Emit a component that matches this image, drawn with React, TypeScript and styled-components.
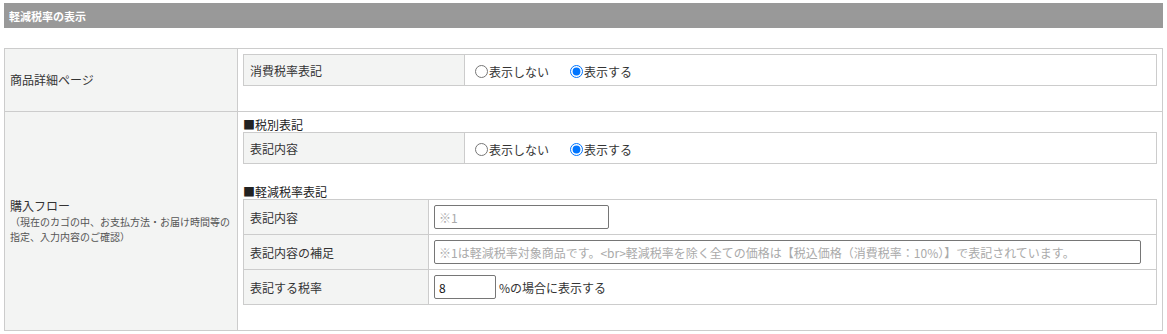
import React from "react";
import styled, { createGlobalStyle } from "styled-components";

const GlobalStyle = createGlobalStyle`
  body {
    margin: 0;
    padding: 3px 4px 0;
    background: #fff;
    color: #333;
    font-family: "Noto Sans CJK JP", "Noto Sans", sans-serif;
    font-size: 12px;
  }
`;

const Title = styled.h2`
  margin: 0;
  height: 25px;
  padding-left: 5px;
  display: flex;
  align-items: center;
  background: #999999;
  color: #fff;
  font-size: 11px;
  font-weight: bold;
`;

const OuterTable = styled.table`
  width: 100%;
  margin-top: 20px;
  border-collapse: collapse;
`;

const HeadCell = styled.th`
  width: 222px;
  padding: 0 5px;
  border: 1px solid #cccccc;
  background: #f3f4f3;
  font-weight: normal;
  text-align: left;
  vertical-align: middle;
  line-height: 16px;
`;

const Note = styled.div`
  color: #555;
  font-size: 10px;
  line-height: 15px;
`;

const BodyCell = styled.td`
  padding: 5px;
  border: 1px solid #cccccc;
  vertical-align: top;
`;

const SubHeading = styled.div`
  line-height: 15px;
  color: #222;
`;

const InnerTable = styled.table<{ $rowHeight: number }>`
  width: 100%;
  margin-bottom: 20px;
  border-collapse: collapse;

  td {
    height: ${(p) => p.$rowHeight}px;
    padding: 0 5px;
    border: 1px solid #cccccc;
    vertical-align: middle;
  }
`;

const Label = styled.td<{ $width: number }>`
  width: ${(p) => p.$width}px;
  background: #f3f4f3;
  && {
    padding: 0 6px;
  }
`;

const RadioGroup = styled.div`
  display: flex;
  align-items: center;
  gap: 16px;
  padding-top: 3px;
`;

const RadioLabel = styled.label`
  display: flex;
  align-items: center;
  color: #333;

  input {
    width: 13px;
    height: 13px;
    margin: 0 1px 0 5px;
  }
`;

const TextInput = styled.input<{ $width: number }>`
  box-sizing: border-box;
  width: ${(p) => p.$width}px;
  height: 24px;
  padding: 0 4px;
  border: 1px solid #767676;
  border-radius: 2px;
  font-family: inherit;
  font-size: 12px;
  color: #111;
  vertical-align: middle;

  &::placeholder {
    color: #aaa;
  }
`;

const Suffix = styled.span`
  margin-left: 3px;
  vertical-align: middle;
`;

const DisplayRadios = ({ name }: { name: string }) => (
  <RadioGroup>
    <RadioLabel>
      <input type="radio" name={name} />
      表示しない
    </RadioLabel>
    <RadioLabel>
      <input type="radio" name={name} defaultChecked />
      表示する
    </RadioLabel>
  </RadioGroup>
);

export default function App() {
  return (
    <>
      <GlobalStyle />
      <Title>軽減税率の表示</Title>
      <OuterTable>
        <tbody>
          <tr>
            <HeadCell>商品詳細ページ</HeadCell>
            <BodyCell>
              <InnerTable $rowHeight={30}>
                <tbody>
                  <tr>
                    <Label $width={208}>消費税率表記</Label>
                    <td>
                      <DisplayRadios name="detail" />
                    </td>
                  </tr>
                </tbody>
              </InnerTable>
            </BodyCell>
          </tr>
          <tr>
            <HeadCell>
              購入フロー
              <Note>
                （現在のカゴの中、お支払方法・お届け時間等の
                <br />
                指定、入力内容のご確認）
              </Note>
            </HeadCell>
            <BodyCell>
              <SubHeading>■税別表記</SubHeading>
              <InnerTable $rowHeight={30}>
                <tbody>
                  <tr>
                    <Label $width={208}>表記内容</Label>
                    <td>
                      <DisplayRadios name="excl" />
                    </td>
                  </tr>
                </tbody>
              </InnerTable>
              <SubHeading>■軽減税率表記</SubHeading>
              <InnerTable $rowHeight={34}>
                <tbody>
                  <tr>
                    <Label $width={172}>表記内容</Label>
                    <td>
                      <TextInput $width={175} placeholder="※1" />
                    </td>
                  </tr>
                  <tr>
                    <Label $width={172}>表記内容の補足</Label>
                    <td>
                      <TextInput
                        $width={707}
                        placeholder="※1は軽減税率対象商品です。<br>軽減税率を除く全ての価格は【税込価格（消費税率：10%）】で表記されています。"
                      />
                    </td>
                  </tr>
                  <tr>
                    <Label $width={172}>表記する税率</Label>
                    <td>
                      <TextInput $width={62} defaultValue="8" />
                      <Suffix>%の場合に表示する</Suffix>
                    </td>
                  </tr>
                </tbody>
              </InnerTable>
            </BodyCell>
          </tr>
        </tbody>
      </OuterTable>
    </>
  );
}
